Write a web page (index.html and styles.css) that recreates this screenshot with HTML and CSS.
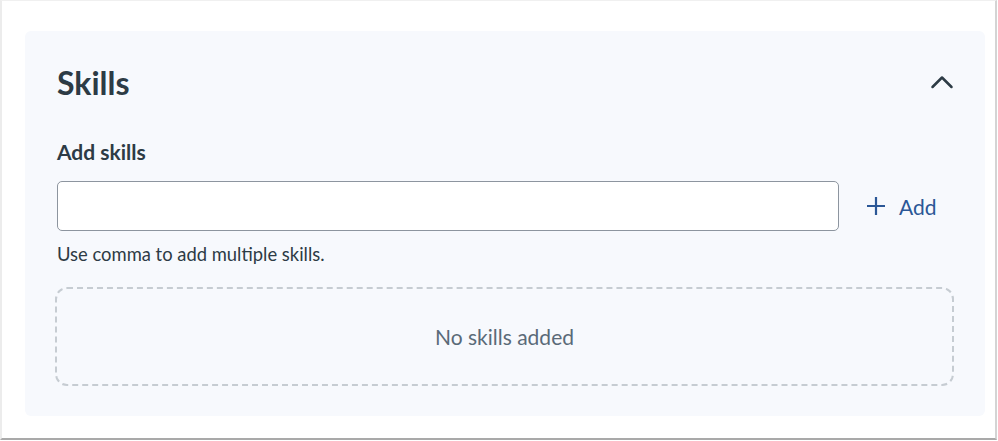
FILE: index.html
```html
<!DOCTYPE html>
<html>
<head>
<meta charset="utf-8">
<link rel="stylesheet" href="styles.css">
</head>
<body>
<div class="frame">
  <section class="panel">
    <header class="panel-head">
      <h2 class="title">Skills</h2>
      <svg class="chevron" width="24" height="16" viewBox="0 0 24 16" aria-hidden="true">
        <path d="M2.5 13 L12 3.5 L21.5 13" fill="none" stroke="#2d3b45" stroke-width="2.5" stroke-linecap="round" stroke-linejoin="round"/>
      </svg>
    </header>
    <label class="field-label" for="skill">Add skills</label>
    <div class="input-row">
      <input id="skill" class="text-input" type="text">
      <button class="add-btn" type="button">
        <svg class="plus" width="20" height="20" viewBox="0 0 20 20" aria-hidden="true">
          <path d="M10 1 V19 M1 10 H19" fill="none" stroke="currentColor" stroke-width="2.2"/>
        </svg>
        <span>Add</span>
      </button>
    </div>
    <p class="hint">Use comma to add multiple skills.</p>
    <div class="empty">No skills added</div>
  </section>
</div>
</body>
</html>
```

FILE: styles.css
```css
* { box-sizing: border-box; }
html, body { margin: 0; padding: 0; background: #ffffff; }
body { font-family: Lato, "Noto Sans", sans-serif; color: #2d3b45; }

.frame {
  width: 997px;
  height: 440px;
  border-top: 1px solid #f0f0f0;
  border-left: 2px solid #ececec;
  border-right: 2px solid #d4d4d4;
  border-bottom: 2px solid #a9a9a9;
  padding: 30px 10px 22px 23px;
}

.panel {
  height: 100%;
  background: #f7f9fd;
  border-radius: 6px;
  padding: 0 31px 0 30px;
}

.panel-head {
  display: flex;
  align-items: center;
  justify-content: space-between;
  height: 102px;
  padding-left: 2px;
}
.title {
  margin: 0;
  font-size: 32px;
  font-weight: 700;
  line-height: 1;
  color: #2d3b45;
  padding-top: 2px;
}
.chevron { margin-right: 0; }

.field-label {
  display: block;
  margin: 6px 0 0 2px;
  font-size: 21px;
  font-weight: 700;
  line-height: 26px;
  color: #2d3b45;
}

.input-row {
  display: flex;
  align-items: center;
  margin-top: 16px;
  margin-left: 2px;
}
.text-input {
  width: 782px;
  height: 50px;
  border: 1px solid #8d959f;
  border-radius: 5px;
  background: #fff;
  font: inherit;
  outline: none;
}
.add-btn {
  display: flex;
  align-items: center;
  gap: 13px;
  margin-left: 27px;
  padding: 0;
  border: 0;
  background: none;
  font-family: Lato, "Noto Sans", sans-serif;
  font-size: 21px;
  color: #2b5796;
  cursor: pointer;
}

.hint {
  margin: 11px 0 0 2px;
  font-size: 18.4px;
  line-height: 24px;
  color: #2d3b45;
}

.empty {
  margin-top: 21px;
  height: 99px;
  border: 2px dashed #c6ccd2;
  border-radius: 12px;
  display: flex;
  align-items: center;
  justify-content: center;
  font-size: 21px;
  color: #5a6a78;
}
```
